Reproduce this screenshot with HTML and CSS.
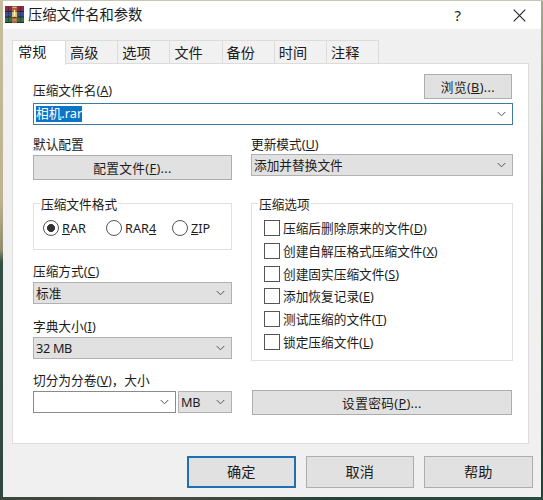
FILE: index.html
```html
<!DOCTYPE html>
<html lang="zh-CN">
<head>
<meta charset="utf-8">
<title>压缩文件名和参数</title>
<link rel="stylesheet" href="styles.css">
</head>
<body>
<div class="window">
  <header class="titlebar">
    <svg class="logo" width="19" height="17" viewBox="0 0 19 17">
      <rect x="0" y="0" width="19" height="5.5" fill="#8d2946"/>
      <rect x="0" y="5.5" width="19" height="5.5" fill="#354f9d"/>
      <rect x="0" y="11" width="19" height="5.5" fill="#2d7545"/>
      <path d="M0 5.5H19M0 11H19M0 16.5H19" stroke="#30232e" stroke-width="1"/>
      <path d="M3.5 1V16M15.5 1V16" stroke="#211b27" stroke-opacity=".4"/>
      <rect x="7" y="0" width="5" height="17" fill="#a5673b"/>
      <path d="M7.5 1.5H11.5M7.5 14H11.5" stroke="#dfb269"/>
      <rect x="6.5" y="5.5" width="6" height="6" rx="1" fill="#e3bd62" stroke="#684331"/>
      <path d="M9.5 4V10" stroke="#fff1b3" stroke-width="1.5"/>
    </svg>
    <h1>压缩文件名和参数</h1>
    <span class="help">?</span>
    <svg class="close" width="13" height="13" viewBox="0 0 13 13"><path d="M.7.7L12.3 12.3M12.3.7L.7 12.3"/></svg>
  </header>
  <nav class="tabs">
    <span class="tab active">常规</span><span class="tab">高级</span><span class="tab">选项</span><span class="tab">文件</span><span class="tab">备份</span><span class="tab">时间</span><span class="tab">注释</span>
  </nav>
  <main class="panel">
    <div class="name-row">
      <span class="label">压缩文件名(<u>A</u>)</span>
      <button class="btn browse">浏览(<u>B</u>)...</button>
    </div>
    <div class="select editable focused"><span class="selected">相机.rar</span><svg class="chev" viewBox="0 0 10 6"><path d="M.8.8L5 5L9.2.8"/></svg></div>
    <div class="columns">
      <section class="left">
        <div class="label first">默认配置</div>
        <button class="btn profile">配置文件(<u>F</u>)...</button>
        <div class="group formats">
          <div class="legend">压缩文件格式</div>
          <div class="radios">
            <span class="option rar"><i class="radio checked"></i><span><u>R</u>AR</span></span>
            <span class="option rar4"><i class="radio"></i><span>RAR<u>4</u></span></span>
            <span class="option"><i class="radio"></i><span><u>Z</u>IP</span></span>
          </div>
        </div>
        <div class="label method">压缩方式(<u>C</u>)</div>
        <div class="select"><span>标准</span><svg class="chev" viewBox="0 0 10 6"><path d="M.8.8L5 5L9.2.8"/></svg></div>
        <div class="label dict">字典大小(<u>I</u>)</div>
        <div class="select"><span class="size">32 MB</span><svg class="chev" viewBox="0 0 10 6"><path d="M.8.8L5 5L9.2.8"/></svg></div>
        <div class="label split">切分为分卷(<u>V</u>)，大小</div>
        <div class="split-row">
          <div class="select editable volume"><span></span><svg class="chev" viewBox="0 0 10 6"><path d="M.8.8L5 5L9.2.8"/></svg></div>
          <div class="select unit"><span class="size">MB</span><svg class="chev" viewBox="0 0 10 6"><path d="M.8.8L5 5L9.2.8"/></svg></div>
        </div>
      </section>
      <section class="right">
        <div class="label first">更新模式(<u>U</u>)</div>
        <div class="select">添加并替换文件<svg class="chev" viewBox="0 0 10 6"><path d="M.8.8L5 5L9.2.8"/></svg></div>
        <div class="group options">
          <div class="legend">压缩选项</div>
          <div class="checks">
            <span class="option"><i class="box"></i><span>压缩后删除原来的文件(<u>D</u>)</span></span>
            <span class="option"><i class="box"></i><span>创建自解压格式压缩文件(<u>X</u>)</span></span>
            <span class="option"><i class="box"></i><span>创建固实压缩文件(<u>S</u>)</span></span>
            <span class="option"><i class="box"></i><span>添加恢复记录(<u>E</u>)</span></span>
            <span class="option"><i class="box"></i><span>测试压缩的文件(<u>T</u>)</span></span>
            <span class="option"><i class="box"></i><span>锁定压缩文件(<u>L</u>)</span></span>
          </div>
        </div>
        <button class="btn password">设置密码(<u>P</u>)...</button>
      </section>
    </div>
  </main>
  <footer class="actions">
    <button class="btn primary">确定</button>
    <button class="btn">取消</button>
    <button class="btn">帮助</button>
  </footer>
</div>
</body>
</html>
```
FILE: styles.css
```css
* { box-sizing: border-box; }
body {
  margin: 0;
  height: 500px;
  padding: 1px 2px 3px 3px;
  overflow: hidden;
  background:
    linear-gradient(#c9c5b4, #c9c5b4) 0 0 / 100% 1px no-repeat,
    linear-gradient(90deg, #3b463b, #4c4b3f 30%, #27443b 60%, #294a3e) 0 100% / 100% 3px no-repeat,
    linear-gradient(#c5be9f 0, #bdb291 200px, #8f8d70 250px, #345044 262px, #30473e 500px) 0 0 / 3px 100% no-repeat,
    linear-gradient(#a5aa8c 0, #7d8d6d 120px, #3f5b45 220px, #1d4236 500px) 100% 0 / 2px 100% no-repeat;
  font: 12.7px/18px "Noto Sans", "Noto Sans CJK SC", sans-serif;
  color: #1c1c1c;
}
u { text-underline-offset: 1px; text-decoration-thickness: 1px; text-decoration-skip-ink: none; }
.window { height: 496px; background: #f0f0f0; }
.titlebar { display: flex; align-items: center; height: 28px; padding: 0 15px 0 2px; background: #fff; }
.logo { display: block; margin-top: -1px; }
h1 { flex: 1; margin: 0 0 0 4px; font-size: 14.3px; line-height: 20px; font-weight: 400; }
.help { margin-right: 52px; font-size: 15px; }
.close { fill: none; stroke: #222; stroke-width: 1.1; }
.tabs { display: flex; height: 35px; padding: 11px 0 0 9px; font-size: 14.2px; line-height: 23px; }
.tab { width: 52.2px; height: 24px; padding-left: 4px; border: 1px solid #dcdcdc; border-left: 0; background: #f1f1f1; }
.tab.active { width: 54px; height: 25px; padding-left: 5px; line-height: 22px; background: #fff; border: 1px solid #dcdcdc; border-bottom: 0; position: relative; }
.panel { width: 517px; height: 381px; margin-left: 9px; padding: 10px 16px 0 20px; border: 1px solid #dcdcdc; background: #fff; margin-top: -1px; }
.label { height: 18px; white-space: nowrap; }
.name-row { display: flex; justify-content: space-between; width: 479px; height: 29px; }
.name-row .label { margin-top: 7px; }
.btn { display: flex; align-items: center; justify-content: center; margin: 0; padding: 0; border: 1px solid #adadad; background: #e1e1e1; color: inherit; font: inherit; letter-spacing: .35px; height: 25px; }
.browse { width: 88px; }
.select { display: flex; align-items: center; justify-content: space-between; height: 22px; padding: 0 6px 0 2px; border: 1px solid #b1b1b1; background: #e1e1e1; white-space: nowrap; }
.select.editable { background: #fff; border-color: #8b8b8b; }
.select.focused { border-color: #41789d; width: 480px; }
.selected { height: 16px; line-height: 15px; background: #0c75c6; color: #fff; }
.size { letter-spacing: -.3px; }
.chev { width: 9px; height: 6px; fill: none; stroke: #505050; stroke-width: 1.1; flex: none; }
.columns { display: flex; justify-content: space-between; width: 480px; padding-top: 10px; }
.left { width: 199px; }
.right { width: 262px; }
.first { height: 19px; }
.profile { width: 199px; margin-top: 1px; }
.group { border: 1px solid #e0e0e0; }
.formats { height: 47px; margin-top: 23px; }
.legend { width: max-content; height: 18px; margin: -9px 0 0 6px; padding: 0 1px; background: #fff; }
.radios { display: flex; padding: 6px 0 0 9px; }
.option { display: flex; align-items: center; white-space: nowrap; }
.rar { width: 63px; }
.rar4 { width: 66px; }
.radio { width: 16px; height: 16px; margin-right: 3px; border: 1px solid #555; border-radius: 50%; background: #fff; }
.checked { background: radial-gradient(circle, #333 0 3.7px, #fff 4.3px); }
.method { margin-top: 12px; height: 20px; }
.dict { margin-top: 13px; height: 20px; }
.split { margin-top: 12px; height: 20px; }
.split-row { display: flex; justify-content: space-between; }
.volume { width: 143px; }
.unit { width: 54px; }
.options { height: 158px; margin-top: 27px; }
.checks { display: grid; grid-auto-rows: 22.7px; padding: 4px 0 0 12px; }
.box { width: 16px; height: 16px; margin-right: 3px; border: 1px solid #555; background: #fff; }
.password { width: 260px; margin: 29px 0 0 1px; }
.actions { display: flex; gap: 10px; padding: 12px 0 0 184px; font-size: 14.2px; }
.actions .btn { width: 108.5px; height: 32px; letter-spacing: 0; }
.actions .primary { border: 2px solid #216fb0; }
```
